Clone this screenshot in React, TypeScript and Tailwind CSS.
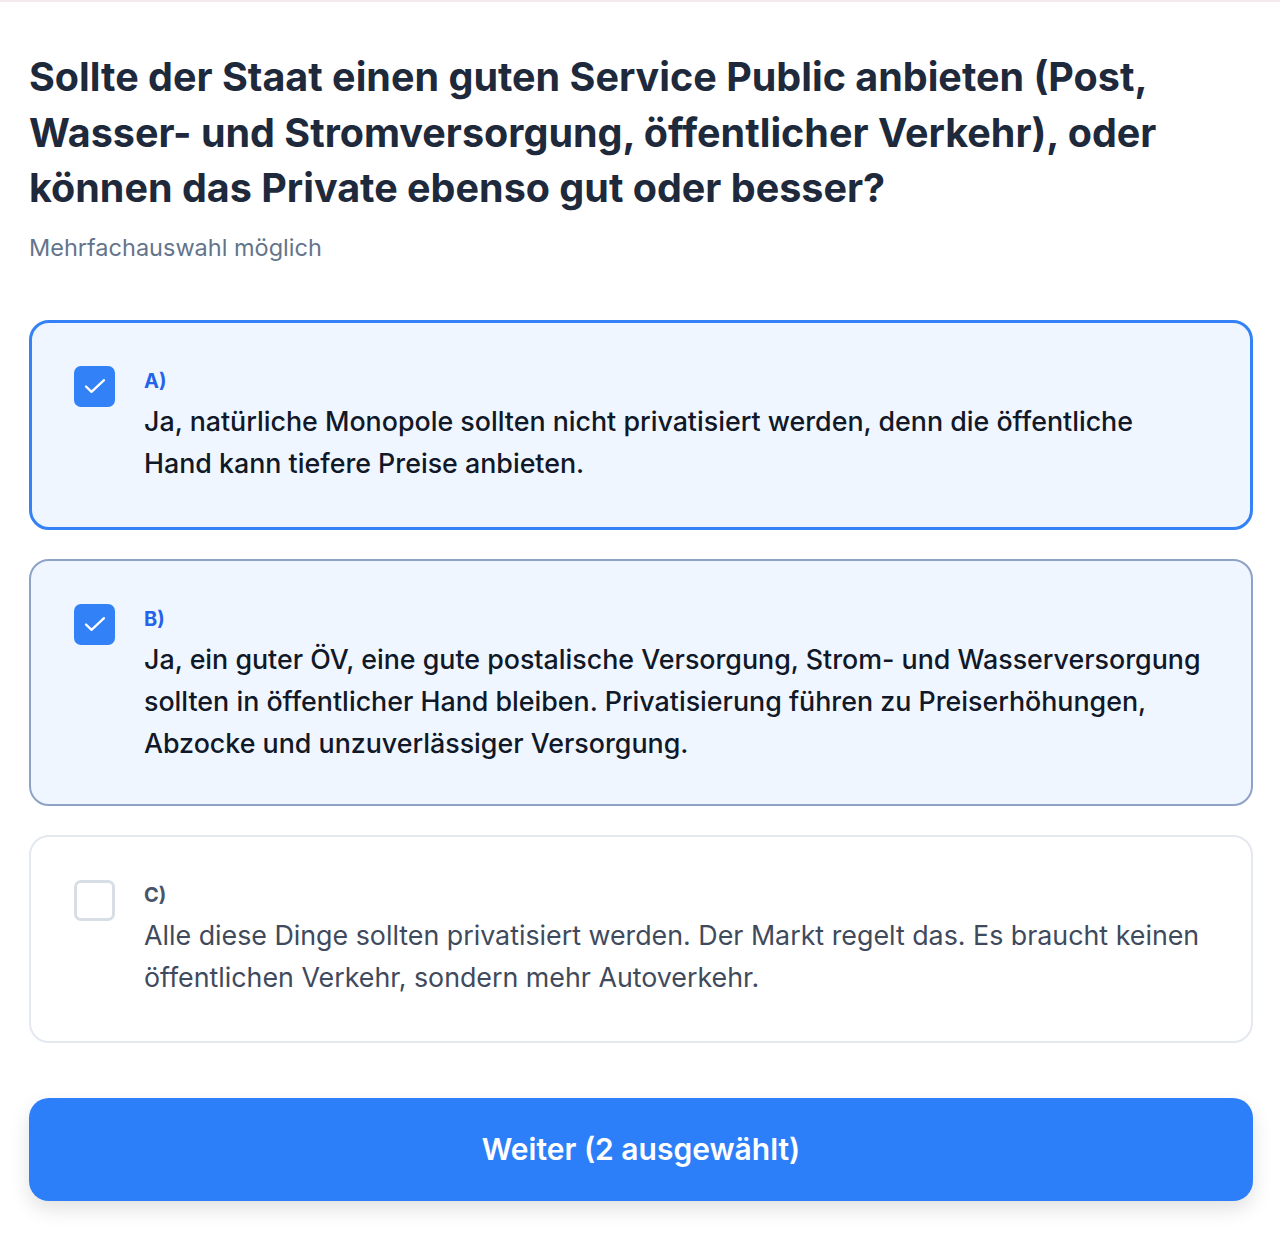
import { FC } from "react";

interface Option {
  key: string;
  text: string;
  selected: boolean;
}

const options: Option[] = [
  {
    key: "A)",
    text: "Ja, natürliche Monopole sollten nicht privatisiert werden, denn die öffentliche Hand kann tiefere Preise anbieten.",
    selected: true,
  },
  {
    key: "B)",
    text: "Ja, ein guter ÖV, eine gute postalische Versorgung, Strom- und Wasserversorgung sollten in öffentlicher Hand bleiben. Privatisierung führen zu Preiserhöhungen, Abzocke und unzuverlässiger Versorgung.",
    selected: true,
  },
  {
    key: "C)",
    text: "Alle diese Dinge sollten privatisiert werden. Der Markt regelt das. Es braucht keinen öffentlichen Verkehr, sondern mehr Autoverkehr.",
    selected: false,
  },
];

const CheckIcon = () => (
  <svg width="22" height="16" viewBox="0 0 22 16" fill="none">
    <path
      d="M2 8.5L7.5 13.8L20 2.2"
      stroke="white"
      strokeWidth="2.3"
      strokeLinecap="round"
      strokeLinejoin="round"
    />
  </svg>
);

const OptionCard: FC<{ option: Option; index: number }> = ({ option, index }) => {
  const cardClass = option.selected
    ? index === 0
      ? "border-[3px] border-[#3482f6] bg-[#eff6ff] pt-[43px] pb-[43px] px-[42px]"
      : "border-2 border-[#8ea2c6] bg-[#eff6ff] pt-[43px] pb-[40px] px-[43px]"
    : "border-2 border-[#e4e8ef] bg-white pt-[43px] pb-[43px] px-[43px]";

  return (
    <div className={`flex gap-[29px] rounded-[20px] ${cardClass}`}>
      {option.selected ? (
        <div className="w-[41px] h-[41px] shrink-0 rounded-[7px] bg-[#3381f7] flex items-center justify-center">
          <CheckIcon />
        </div>
      ) : (
        <div className="w-[41px] h-[41px] shrink-0 rounded-[7px] border-[3px] border-[#d8dee6] bg-white" />
      )}
      <div className="flex-1 pt-[2px] pr-[2px]">
        <div
          className={`text-[20px] leading-[26px] font-bold ${
            option.selected ? "text-[#2563eb]" : "text-[#475569]"
          }`}
        >
          {option.key}
        </div>
        <p
          className={`mt-[6px] text-[26.8px] leading-[42px] ${
            option.selected ? "font-medium text-[#111827]" : "font-normal text-[#3f4a5c]"
          }`}
        >
          {option.text}
        </p>
      </div>
    </div>
  );
};

export default function App() {
  return (
    <div className="min-h-[1236px] bg-white border-t-2 border-[#f4e9ec] font-['Inter',sans-serif]">
      <div className="pl-[29px] pr-[27px] pt-[48px] pb-[32px]">
        <h1 className="text-[39.5px] leading-[55.5px] font-bold text-[#1e293b] pr-[60px]">
          Sollte der Staat einen guten Service Public anbieten (Post, Wasser- und Stromversorgung, öffentlicher Verkehr), oder können das Private ebenso gut oder besser?
        </h1>
        <p className="mt-[15px] text-[23.5px] leading-[32px] text-[#64748b]">
          Mehrfachauswahl möglich
        </p>

        <div className="mt-[56px] flex flex-col gap-[29px]">
          {options.map((o, i) => (
            <OptionCard key={o.key} option={o} index={i} />
          ))}
        </div>

        <button className="mt-[55px] w-full h-[103px] rounded-[20px] bg-[#2d7ff9] text-white text-[30px] font-semibold shadow-[0_8px_20px_rgba(0,0,0,0.12)]">
          Weiter (2 ausgewählt)
        </button>
      </div>
    </div>
  );
}
